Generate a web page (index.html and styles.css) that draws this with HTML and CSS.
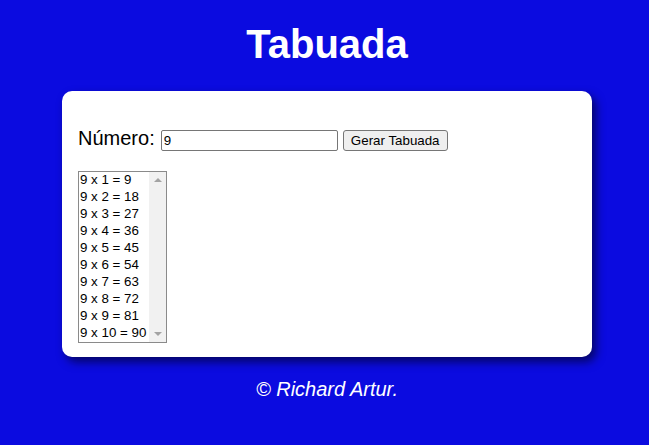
FILE: index.html
```html
<!DOCTYPE html>
<html lang="pt-BR">
<head>
<meta charset="utf-8">
<title>Tabuada</title>
<link rel="stylesheet" href="styles.css">
</head>
<body>
<header class="header">
  <h1 class="title">Tabuada</h1>
</header>
<main class="card">
  <div class="row">
    <label class="label" for="num">Número:</label>
    <input class="num-input" id="num" type="text" value="9">
    <button class="btn" type="button">Gerar Tabuada</button>
  </div>
  <div class="listbox">
    <div class="options">
      <div class="opt">9 x 1 = 9</div>
      <div class="opt">9 x 2 = 18</div>
      <div class="opt">9 x 3 = 27</div>
      <div class="opt">9 x 4 = 36</div>
      <div class="opt">9 x 5 = 45</div>
      <div class="opt">9 x 6 = 54</div>
      <div class="opt">9 x 7 = 63</div>
      <div class="opt">9 x 8 = 72</div>
      <div class="opt">9 x 9 = 81</div>
      <div class="opt">9 x 10 = 90</div>
    </div>
    <div class="scrollbar">
      <span class="arrow arrow-up"></span>
      <span class="arrow arrow-down"></span>
    </div>
  </div>
</main>
<footer class="footer">
  <p class="credit">&copy; Richard Artur.</p>
</footer>
</body>
</html>
```
FILE: styles.css
```css
html, body {
  margin: 0;
  padding: 0;
}
body {
  background: #0b0be0;
  font-family: "Liberation Sans", Arial, sans-serif;
  padding-left: 5px;
  min-height: 445px;
  box-sizing: border-box;
}
.header {
  text-align: center;
}
.title {
  margin: 0;
  padding: 21px 0 24px;
  font-size: 40px;
  line-height: 46px;
  font-weight: bold;
  color: #ffffff;
}
.card {
  width: 530px;
  box-sizing: border-box;
  margin: 0 auto;
  background: #ffffff;
  border-radius: 10px;
  padding: 36px 16px 14px;
  box-shadow: 4px 5px 10px rgba(0, 0, 0, 0.55);
}
.row {
  display: flex;
  align-items: baseline;
  height: 23px;
}
.label {
  font-size: 20px;
  line-height: 23px;
  color: #000;
  margin-right: 6px;
}
.num-input {
  width: 177px;
  height: 21px;
  box-sizing: border-box;
  border: 1px solid #767676;
  border-radius: 2px;
  padding: 1px 2px;
  font-family: "Liberation Sans", Arial, sans-serif;
  font-size: 13.33px;
  margin: 0 5px 0 0;
  outline: none;
}
.btn {
  width: 105px;
  height: 21px;
  box-sizing: border-box;
  border: 1px solid #767676;
  border-radius: 3px;
  background: #efefef;
  font-family: "Liberation Sans", Arial, sans-serif;
  font-size: 13.33px;
  padding: 1px 6px;
  color: #000;
  margin: 0;
}
.listbox {
  margin-top: 21px;
  width: 89px;
  height: 172px;
  box-sizing: border-box;
  border: 1px solid #8a8a8a;
  display: flex;
}
.options {
  flex: 1;
}
.opt {
  font-size: 13.33px;
  height: 17px;
  line-height: 15px;
  padding-left: 1px;
  color: #000;
  white-space: nowrap;
}
.scrollbar {
  width: 17px;
  background: #f1f1f1;
  position: relative;
}
.arrow {
  position: absolute;
  left: 5px;
  width: 0;
  height: 0;
  border-left: 4px solid transparent;
  border-right: 4px solid transparent;
}
.arrow-up {
  top: 6px;
  border-bottom: 4px solid #a3a3a3;
}
.arrow-down {
  bottom: 6px;
  border-top: 4px solid #a3a3a3;
}
.footer {
  text-align: center;
}
.credit {
  margin: 21px 0 0;
  font-size: 20px;
  line-height: 23px;
  font-style: italic;
  color: #ffffff;
}
```
